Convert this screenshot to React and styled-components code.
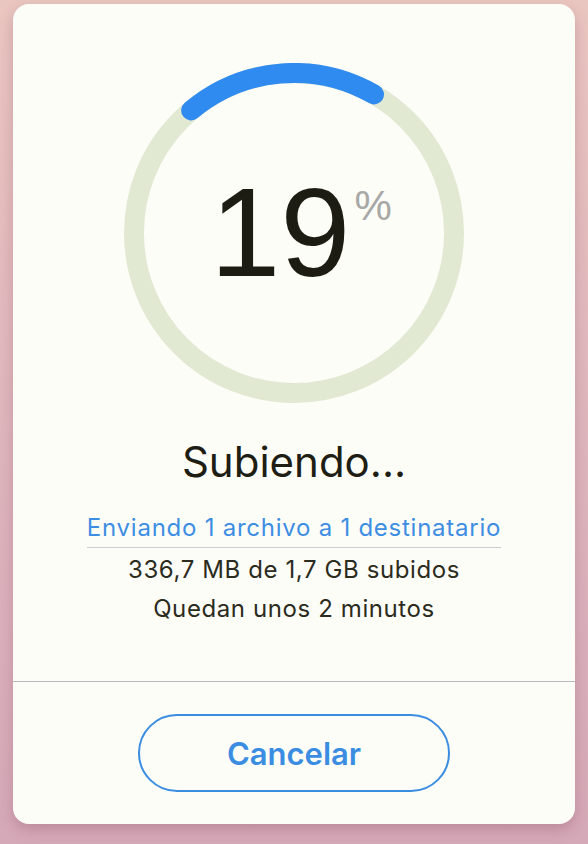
import React from 'react';
import styled, { createGlobalStyle } from 'styled-components';

const GlobalStyle = createGlobalStyle`
  html, body {
    margin: 0;
    padding: 0;
    height: 100%;
  }
  body {
    background: linear-gradient(180deg, #eac6c0 0%, #dfb5bd 55%, #d6a9b8 100%);
    font-family: Inter, "Liberation Sans", sans-serif;
  }
`;

const Page = styled.div`
  width: 588px;
  height: 844px;
  padding: 4px 13px 0;
  box-sizing: border-box;
`;

const Card = styled.div`
  width: 562px;
  height: 820px;
  background: #fdfdf8;
  border-radius: 16px;
  box-shadow: 0 6px 14px rgba(120, 60, 85, 0.28);
  display: flex;
  flex-direction: column;
  overflow: hidden;
`;

const Body = styled.div`
  flex: 1;
  display: flex;
  flex-direction: column;
  align-items: center;
  padding-top: 59px;
`;

const Ring = styled.div`
  width: 340px;
  height: 340px;
  display: grid;
  place-items: center;

  & > * {
    grid-area: 1 / 1;
  }
`;

const Percent = styled.div`
  display: flex;
  align-items: flex-start;
  padding-left: 14px;
  font-family: "Liberation Sans", Arial, sans-serif;
`;

const Number = styled.span`
  font-size: 126px;
  line-height: 1;
  color: #1c1c12;
`;

const Sign = styled.span`
  font-size: 42px;
  line-height: 1;
  color: #a8a8a6;
  margin-top: 15px;
  margin-left: 4px;
`;

const Title = styled.h1`
  margin: 34px 0 0;
  font-size: 42px;
  font-weight: 400;
  line-height: 50px;
  color: #1e1e14;
`;

const Recipients = styled.div`
  margin-top: 26px;
  padding-bottom: 4px;
  border-bottom: 1px solid #d0ccd2;
  font-size: 24px;
  letter-spacing: 0.75px;
  line-height: 30px;
  color: #3d8ee3;
`;

const Info = styled.div`
  font-size: 24px;
  letter-spacing: 0.6px;
  line-height: 39px;
  color: #2b2b20;
  margin-top: ${({ $first }) => ($first ? '2px' : '0')};
`;

const Footer = styled.div`
  border-top: 1px solid #bdb8bc;
  padding: 32px 0;
  display: flex;
  justify-content: center;
`;

const CancelButton = styled.button`
  width: 312px;
  height: 78px;
  border: 2px solid #3b8de2;
  border-radius: 39px;
  background: transparent;
  font-family: Inter, "Liberation Sans", sans-serif;
  font-size: 31px;
  font-weight: 600;
  color: #3b8de2;
  cursor: pointer;
`;

const ProgressRing = () => (
  <svg width="340" height="340" viewBox="0 0 340 340">
    <circle cx="170" cy="170" r="160" fill="none" stroke="#e1e9d2" strokeWidth="20" />
    <path
      d="M 67.15 47.43 A 160 160 0 0 1 250 31.44"
      fill="none"
      stroke="#2f8bf0"
      strokeWidth="20"
      strokeLinecap="round"
    />
  </svg>
);

export default function App() {
  return (
    <>
      <GlobalStyle />
      <Page>
        <Card>
          <Body>
            <Ring>
              <ProgressRing />
              <Percent>
                <Number>19</Number>
                <Sign>%</Sign>
              </Percent>
            </Ring>
            <Title>Subiendo...</Title>
            <Recipients>Enviando 1 archivo a 1 destinatario</Recipients>
            <Info $first>336,7 MB de 1,7 GB subidos</Info>
            <Info>Quedan unos 2 minutos</Info>
          </Body>
          <Footer>
            <CancelButton>Cancelar</CancelButton>
          </Footer>
        </Card>
      </Page>
    </>
  );
}
